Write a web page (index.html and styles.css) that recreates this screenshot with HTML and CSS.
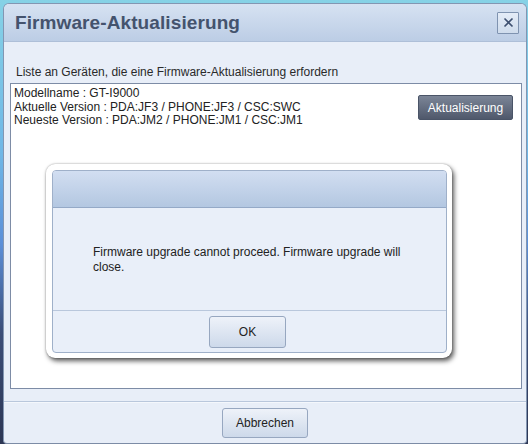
FILE: index.html
```html
<!DOCTYPE html>
<html>
<head>
<meta charset="utf-8">
<link rel="stylesheet" href="styles.css">
</head>
<body>
<div class="window">
  <div class="titlebar">
    <h1 class="title">Firmware-Aktualisierung</h1>
    <button class="close" aria-label="Schließen">
      <svg width="11" height="11" viewBox="0 0 11 11"><path d="M1.5 1.5 L9.5 9.5 M9.5 1.5 L1.5 9.5" stroke="#3e5070" stroke-width="1.6" fill="none"/></svg>
    </button>
  </div>
  <div class="content">
    <p class="label">Liste an Geräten, die eine Firmware-Aktualisierung erfordern</p>
    <div class="list">
      <div class="device">
        <div class="info">
          <div>Modellname : GT-I9000</div>
          <div>Aktuelle Version : PDA:JF3 / PHONE:JF3 / CSC:SWC</div>
          <div>Neueste Version : PDA:JM2 / PHONE:JM1 / CSC:JM1</div>
        </div>
        <button class="dark-btn">Aktualisierung</button>
      </div>
    </div>
  </div>
  <div class="footer">
    <button class="btn cancel">Abbrechen</button>
  </div>

  <div class="modal">
    <div class="modal-inner">
      <div class="modal-head"></div>
      <div class="modal-body">
        <p class="message">Firmware upgrade cannot proceed. Firmware upgrade will close.</p>
      </div>
      <div class="modal-foot">
        <button class="btn ok">OK</button>
      </div>
    </div>
  </div>
</div>
</body>
</html>
```

FILE: styles.css
```css
html, body {
  margin: 0;
  padding: 0;
  height: 444px;
  overflow: hidden;
}
body {
  background: linear-gradient(to bottom, #86d2e6 0%, #6fb6e6 35%, #5b8fd8 55%, #3c4e78 75%, #2c3654 100%);
  font-family: "Liberation Sans", Arial, sans-serif;
  color: #222;
  padding: 3px 1px 0 3px;
  box-sizing: border-box;
}
.window {
  position: relative;
  height: 441px;
  box-sizing: border-box;
  border: 1px solid #8396b2;
  border-bottom-color: #7c8ca6;
  border-radius: 6px 6px 4px 4px;
  background: #e8eef8;
  display: flex;
  flex-direction: column;
  overflow: hidden;
}
.titlebar {
  height: 38px;
  flex: none;
  box-sizing: border-box;
  background: linear-gradient(to bottom, #d6e2f2, #bccde5);
  border-bottom: 1px solid #aebfd8;
  display: flex;
  align-items: center;
  justify-content: space-between;
  padding: 0 7px 0 11px;
}
.title {
  margin: 0;
  font-size: 19px;
  font-weight: bold;
  color: #44536d;
  letter-spacing: 0.1px;
}
.close {
  width: 22px;
  height: 22px;
  padding: 0;
  border: 1px solid #7f93b0;
  border-radius: 1px;
  background: linear-gradient(to bottom, #e4ecf7, #cfdcec);
  display: flex;
  align-items: center;
  justify-content: center;
}
.content {
  flex: 1;
  padding: 23px 4px 12px 6px;
  display: flex;
  flex-direction: column;
}
.label {
  margin: 0 0 4px 6px;
  font-size: 12px;
  line-height: 14px;
  color: #2a2a2a;
}
.list {
  flex: 1;
  background: #fff;
  border: 1px solid #7d8ca6;
  padding: 3px 8px 0 3px;
}
.device {
  display: flex;
  justify-content: space-between;
  align-items: flex-start;
}
.info {
  font-size: 12px;
  line-height: 13.5px;
  color: #222;
}
.dark-btn {
  margin-top: 8px;
  width: 95px;
  height: 25px;
  border: 1px solid #4a5467;
  border-radius: 2px;
  background: linear-gradient(to bottom, #7b8597, #4f586b);
  color: #fff;
  font-family: "Liberation Sans", Arial, sans-serif;
  font-size: 12px;
  padding: 0;
}
.footer {
  flex: none;
  height: 42px;
  box-sizing: border-box;
  border-top: 1px solid #b9c7dc;
  box-shadow: inset 0 1px 0 #f4f7fc;
  display: flex;
  justify-content: center;
  padding-top: 6px;
}
.btn {
  font-family: "Liberation Sans", Arial, sans-serif;
  font-size: 12px;
  color: #222;
  border: 1px solid #97a7c0;
  border-radius: 3px;
  background: linear-gradient(to bottom, #eef2f9, #cdd9ea);
  padding: 0;
}
.cancel {
  width: 86px;
  height: 30px;
}
.modal {
  position: absolute;
  left: 42px;
  top: 160px;
  width: 406px;
  height: 194px;
  box-sizing: border-box;
  background: #fff;
  border-radius: 9px;
  padding: 6px 5px 5px 6px;
  box-shadow: 2px 3px 5px rgba(0,0,0,0.65), 0 0 2px rgba(0,0,0,0.35);
}
.modal-inner {
  height: 100%;
  box-sizing: border-box;
  border: 1px solid #9fb0c9;
  border-radius: 4px;
  background: #e9eff9;
  display: flex;
  flex-direction: column;
  overflow: hidden;
}
.modal-head {
  height: 37px;
  flex: none;
  box-sizing: border-box;
  background: linear-gradient(to bottom, #d2def1, #b3c7e1);
  border-bottom: 1px solid #94a9c7;
}
.modal-body {
  flex: 1;
  padding: 37px 20px 0 40px;
}
.message {
  margin: 0;
  font-size: 12px;
  line-height: 15px;
  color: #222;
}
.modal-foot {
  flex: none;
  height: 42px;
  box-sizing: border-box;
  border-top: 1px solid #b9c7dc;
  display: flex;
  justify-content: center;
  padding-top: 5px;
}
.ok {
  width: 77px;
  height: 32px;
  margin-left: -4px;
}
```
